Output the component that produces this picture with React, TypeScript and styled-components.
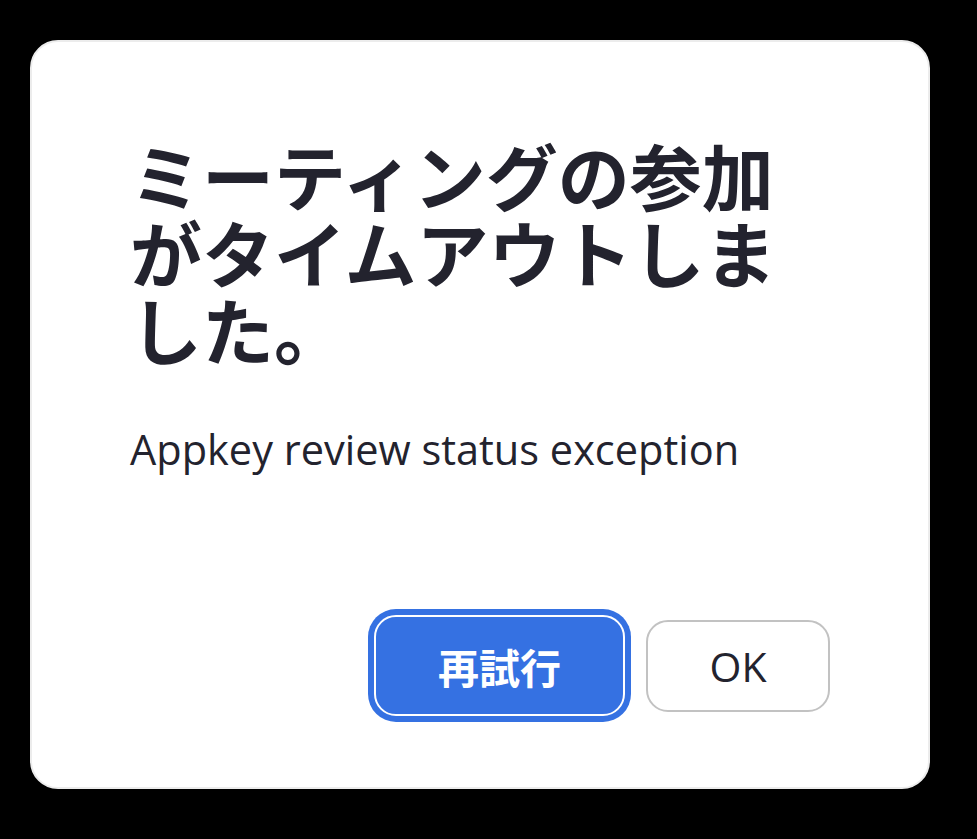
import React from "react";
import styled, { createGlobalStyle } from "styled-components";

const Global = createGlobalStyle`
  html, body { margin: 0; padding: 0; background: #000; }
  body { width: 977px; height: 839px; overflow: hidden; }
`;

const Screen = styled.div`
  width: 977px;
  height: 839px;
  box-sizing: border-box;
  padding: 40px 0 0 30px;
  background: #000;
`;

const Dialog = styled.div`
  width: 900px;
  height: 749px;
  box-sizing: border-box;
  background: #fff;
  border: 2px solid #ececec;
  border-radius: 28px;
  padding: 93px 98px 71px 98px;
  display: flex;
  flex-direction: column;
`;

const Title = styled.h1`
  margin: 0;
  font-family: "Noto Sans CJK JP", "Noto Sans", sans-serif;
  font-weight: 700;
  font-size: 72px;
  line-height: 77px;
  color: #23232e;
`;

const Message = styled.p`
  margin: 55px 0 0;
  font-family: "Open Sans", "Noto Sans", sans-serif;
  font-size: 41.5px;
  line-height: 56px;
  color: #23232e;
`;

const Actions = styled.div`
  margin-top: auto;
  display: flex;
  justify-content: flex-end;
  align-items: center;
  gap: 21px;
`;

const PrimaryButton = styled.button`
  width: 251px;
  height: 101px;
  box-sizing: border-box;
  background: #3571e2;
  border: 2px solid #fff;
  border-radius: 22px;
  box-shadow: 0 0 0 6px #3571e2;
  color: #fff;
  font-family: "Noto Sans CJK JP", sans-serif;
  font-weight: 700;
  font-size: 41px;
  padding: 0;
`;

const SecondaryButton = styled.button`
  width: 184px;
  height: 92px;
  box-sizing: border-box;
  background: #fff;
  border: 2px solid #c2c2c2;
  border-radius: 22px;
  color: #23232e;
  font-family: "Open Sans", "Noto Sans", sans-serif;
  font-size: 41px;
  padding: 0;
`;

export default function App() {
  return (
    <Screen>
      <Global />
      <Dialog>
        <Title>ミーティングの参加がタイムアウトしました。</Title>
        <Message>Appkey review status exception</Message>
        <Actions>
          <PrimaryButton>再試行</PrimaryButton>
          <SecondaryButton>OK</SecondaryButton>
        </Actions>
      </Dialog>
    </Screen>
  );
}
